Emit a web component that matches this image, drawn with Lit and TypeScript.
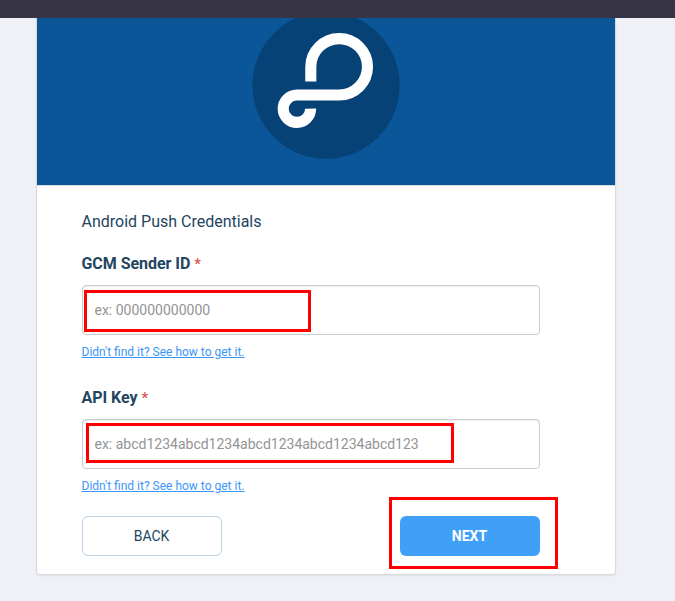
import { LitElement, html, css } from "lit";
import { customElement, property } from "lit/decorators.js";

@customElement("credential-field")
class CredentialField extends LitElement {
  @property() label = "";
  @property() hint = "";

  static styles = css`
    :host { display: block; height: 134px; }
    .label {
      display: block; height: 20px; margin-left: -0.5px; line-height: 20px; font-size: 16px;
      font-weight: 700; letter-spacing: -0.05px; color: #224562;
    }
    .star { color: #d9534f; font-size: 15px; font-weight: 500; }
    .input {
      display: block; box-sizing: border-box; width: 458px; height: 50px; margin-top: 11px;
      padding: 0 11.5px; border: 1px solid #ccc; border-radius: 4px; background: #fff;
      box-shadow: inset 0 1px 1px rgba(0, 0, 0, 0.075);
      font: 400 14px/20px Roboto, sans-serif; outline: none;
    }
    .input::placeholder { color: #949494; opacity: 1; }
    .help {
      display: block; width: max-content; margin: 9px 0 0 -0.5px; font-size: 12px; line-height: 16px;
      color: #3c96f7; text-decoration: underline;
    }
  `;

  render() {
    return html`
      <label class="label">${this.label} <span class="star">*</span></label>
      <input class="input" placeholder=${this.hint} />
      <a class="help">Didn't find it? See how to get it.</a>
    `;
  }
}

@customElement("app-root")
class AppRoot extends LitElement {
  static styles = css`
    :host {
      display: block; position: relative; height: 601px; overflow: hidden;
      background: #eff1f6; font-family: Roboto, sans-serif; color: #224562;
    }
    .topbar { height: 18px; background: #373545; }
    .card {
      box-sizing: border-box; width: 580px; height: 557px; margin-left: 36px;
      border: 1px solid #d9dadc; border-top: 0; border-radius: 0 0 4px 4px;
      background: #fff; box-shadow: 0 1px 2px rgba(0, 0, 0, 0.07);
    }
    .hero { height: 167px; background: #0a5699; border-bottom: 1px solid #d8dde2; }
    .logo { display: block; width: 578px; height: 167px; }
    .body { padding: 26px 0 0 45px; }
    .title { margin: 0 0 22px -0.5px; height: 20px; font-size: 16px; line-height: 20px; font-weight: 400; }
    .actions { display: flex; justify-content: space-between; width: 458px; margin-top: -6px; }
    .btn {
      box-sizing: border-box; width: 140px; height: 40px; padding: 0 1px 0 0; border-radius: 6px;
      font: 400 14px/20px Roboto, sans-serif;
    }
    .back { border: 1px solid #bcd3e6; background: #fff; color: #224562; }
    .next { border: 0; background: #40a0f8; color: #fff; font-weight: 700; }
    .mark { position: absolute; box-sizing: border-box; border: 3px solid #f00; pointer-events: none; }
    .mark-sender { left: 84px; top: 290px; width: 227px; height: 42px; }
    .mark-key { left: 86px; top: 423px; width: 368px; height: 40px; }
    .mark-next { left: 389px; top: 497px; width: 169px; height: 72px; }
  `;

  render() {
    return html`
      <div class="topbar"></div>
      <section class="card">
        <div class="hero">
          <svg class="logo" viewBox="37 18 578 167">
            <circle cx="326.1" cy="85.2" r="73.6" fill="#064275" />
            <path d="M310.8 81.4V67A28.4 28.3 0 0 1 339.2 38.6A28.3 28.2 0 0 1 367.5 66.8A28.3 28.2 0 0 1 339.2 95H296.8A13.7 13.7 0 1 0 310.6 108.6"
              fill="none" stroke="#fff" stroke-width="11.1" />
          </svg>
        </div>
        <div class="body">
          <h1 class="title">Android Push Credentials</h1>
          <credential-field label="GCM Sender ID" hint="ex: 000000000000"></credential-field>
          <credential-field label="API Key" hint="ex: abcd1234abcd1234abcd1234abcd1234abcd123"></credential-field>
          <div class="actions">
            <button class="btn back">BACK</button>
            <button class="btn next">NEXT</button>
          </div>
        </div>
      </section>
      <div class="mark mark-sender"></div>
      <div class="mark mark-key"></div>
      <div class="mark mark-next"></div>
    `;
  }
}
